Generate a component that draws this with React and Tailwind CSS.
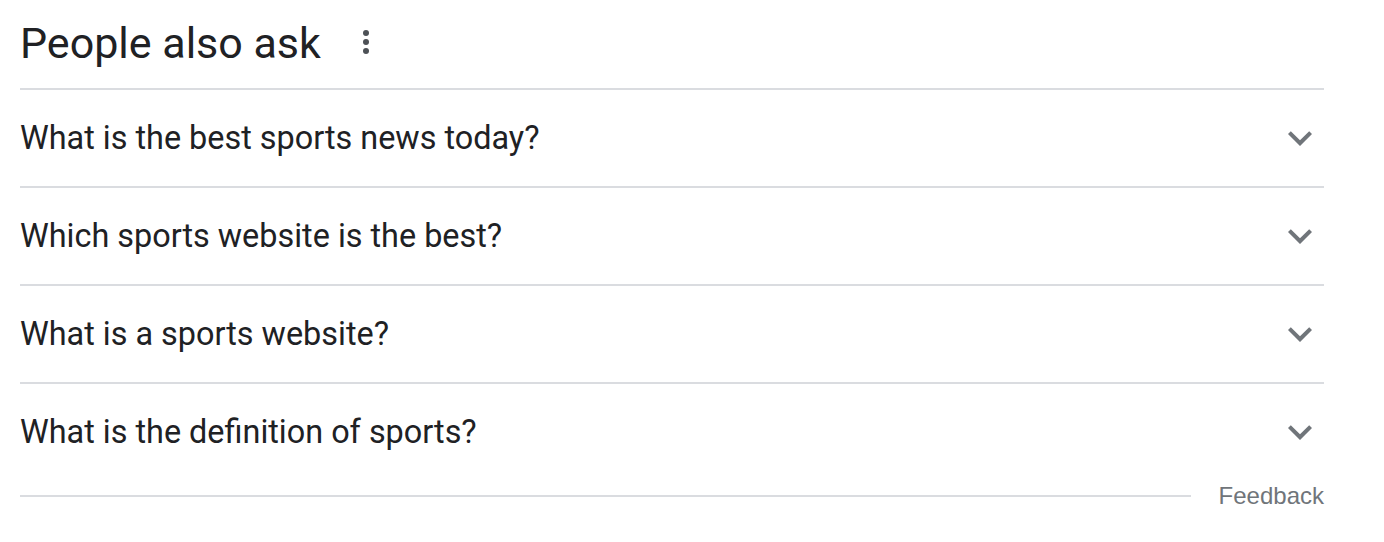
import React from "react";

const QUESTIONS = [
  "What is the best sports news today?",
  "Which sports website is the best?",
  "What is a sports website?",
  "What is the definition of sports?",
];

function ExpandMore() {
  return (
    <svg width="48" height="48" viewBox="0 0 24 24" fill="#70757a">
      <path d="M16.59 8.59L12 13.17 7.41 8.59 6 10l6 6 6-6z" />
    </svg>
  );
}

function MoreVert() {
  return (
    <svg width="36" height="36" viewBox="0 0 24 24" fill="#4d5156">
      <circle cx="12" cy="6" r="2" />
      <circle cx="12" cy="12" r="2" />
      <circle cx="12" cy="18" r="2" />
    </svg>
  );
}

export default function App() {
  return (
    <div className="min-h-screen bg-white" style={{ fontFamily: "Roboto, 'Liberation Sans', sans-serif" }}>
      <div className="ml-[20px] w-[1304px]">
        <div className="h-[88px] flex items-center">
          <h2 className="text-[43px] leading-none text-[#202124] font-normal -mt-[2px]">People also ask</h2>
          <div className="ml-[27px] -mt-[4px] flex items-center">
            <MoreVert />
          </div>
        </div>

        {QUESTIONS.map(q => (
          <div key={q} className="border-t-2 border-[#dadce0] h-[98px] flex items-center justify-between">
            <span className="text-[32.4px] text-[#202124] leading-none">{q}</span>
            <ExpandMore />
          </div>
        ))}

        <div className="h-[4px]" />
        <div className="flex items-center">
          <div className="flex-1 h-[2px] bg-[#dadce0]" />
          <span
            className="ml-[28px] text-[24px] text-[#70757a] leading-none"
            style={{ fontFamily: "'Liberation Sans', Arial, sans-serif" }}
          >
            Feedback
          </span>
        </div>
      </div>
    </div>
  );
}
